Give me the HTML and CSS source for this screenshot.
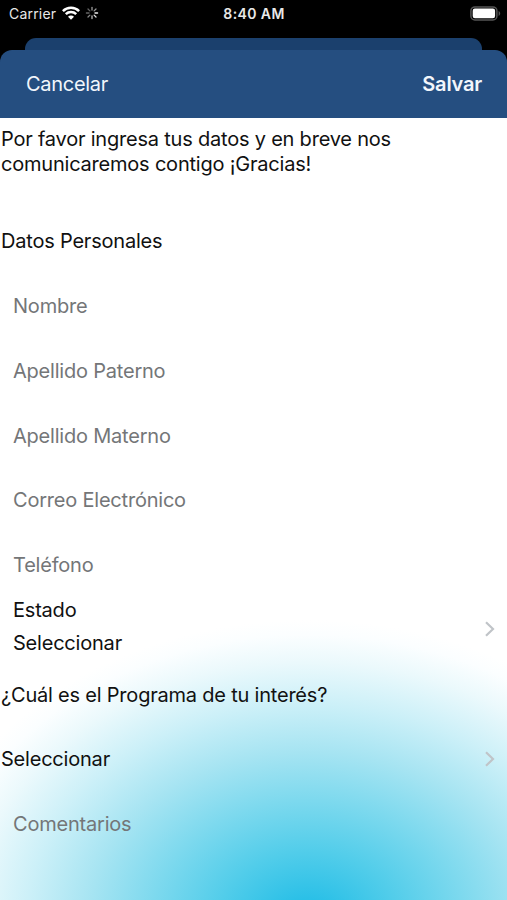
FILE: index.html
```html
<!DOCTYPE html>
<html lang="es">
<head>
<meta charset="utf-8">
<meta name="viewport" content="width=device-width, initial-scale=1">
<title>Datos Personales</title>
<link rel="stylesheet" href="styles.css">
</head>
<body>
<div class="screen">
  <header class="status">
    <div class="status-left">
      <span class="carrier">Carrier</span>
      <svg class="wifi" width="18" height="14" viewBox="0 0 18 14" fill="none" stroke="#fff" stroke-width="2.5">
        <path d="M.9 5.1a11.5 11.5 0 0 1 16.2 0"/>
        <path d="M3.8 8.2a7.4 7.4 0 0 1 10.4 0"/>
        <path d="M6 10.7a4.2 4.2 0 0 1 6 0L9 13.7z" fill="#fff" stroke="none"/>
      </svg>
      <svg class="spinner" width="14" height="14" viewBox="-7 -7 14 14" stroke-width="1.3" stroke-linecap="round">
        <path d="M0-3V-5.6" stroke="#999"/>
        <path d="M2.1-2.1 4-4" stroke="#999"/>
        <path d="M3 0H5.6" stroke="#eee"/>
        <path d="M2.1 2.1 4 4" stroke="#ddd"/>
        <path d="M0 3V5.6" stroke="#bbb"/>
        <path d="M-2.1 2.1-4 4" stroke="#888"/>
        <path d="M-3 0H-5.6" stroke="#666"/>
        <path d="M-2.1-2.1-4-4" stroke="#666"/>
      </svg>
    </div>
    <span class="clock">8:40 AM</span>
    <svg class="battery" width="31" height="15" viewBox="0 0 31 15">
      <rect x=".9" y=".9" width="26" height="13" rx="4" fill="#000" stroke="#555" stroke-width="1.5"/>
      <rect x="2.7" y="2.6" width="22.4" height="9.6" rx="2.2" fill="#fff"/>
      <path d="M28.6 5.1c2.1.8 2.1 4 0 4.8z" fill="#555"/>
    </svg>
  </header>
  <div class="sheet-behind"></div>
  <main class="sheet">
    <nav class="navbar">
      <span class="cancel">Cancelar</span>
      <span class="save">Salvar</span>
    </nav>
    <div class="form">
      <div class="intro">Por favor ingresa tus datos y en breve nos<br>comunicaremos contigo ¡Gracias!</div>
      <div class="row"><span>Datos Personales</span></div>
      <div class="row field"><span>Nombre</span></div>
      <div class="row field"><span>Apellido Paterno</span></div>
      <div class="row field"><span>Apellido Materno</span></div>
      <div class="row field"><span>Correo Electrónico</span></div>
      <div class="row field"><span>Teléfono</span></div>
      <div class="row picker inset">
        <div class="stack"><span>Estado</span><span>Seleccionar</span></div>
        <svg class="chevron" width="12" height="18" viewBox="0 0 12 18"><path d="M2 2.2 9 9 2 15.8"/></svg>
      </div>
      <div class="row"><span>¿Cuál es el Programa de tu interés?</span></div>
      <div class="row picker">
        <span>Seleccionar</span>
        <svg class="chevron" width="12" height="18" viewBox="0 0 12 18"><path d="M2 2.2 9 9 2 15.8"/></svg>
      </div>
      <div class="row field"><span>Comentarios</span></div>
    </div>
  </main>
</div>
</body>
</html>
```
FILE: styles.css
```css
* { box-sizing: border-box; }
body {
  margin: 0;
  background: #000;
  font-family: Inter, "Liberation Sans", sans-serif;
  font-size: 20px;
  letter-spacing: -0.21px;
  color: #111;
}
.screen {
  width: 507px;
  height: 900px;
  display: flex;
  flex-direction: column;
  overflow: hidden;
}
.status {
  height: 38px;
  flex: none;
  padding: 0 7px 11px 9px;
  display: grid;
  grid-template-columns: 1fr auto 1fr;
  align-items: center;
  color: #e8e8e8;
  font-size: 14px;
  letter-spacing: 0.2px;
}
.status-left { display: flex; align-items: center; }
.wifi { margin-left: 6px; margin-top: -2px; }
.spinner { margin-left: 5px; margin-top: -1px; }
.clock { font-weight: 600; letter-spacing: 0.4px; margin-left: -1px; }
.battery { justify-self: end; margin-right: -1px; }
.sheet-behind {
  height: 12px;
  flex: none;
  margin: 0 25px;
  background: #1b406d;
  border-radius: 11px 11px 0 0;
}
.sheet {
  flex: 1;
  display: flex;
  flex-direction: column;
}
.navbar {
  height: 68px;
  flex: none;
  padding: 0 25px 0 26px;
  display: flex;
  justify-content: space-between;
  align-items: center;
  background: #254e80;
  border-radius: 12px 12px 0 0;
  color: #f2f6fc;
  letter-spacing: -0.3px;
}
.save { font-weight: 600; letter-spacing: -0.2px; }
.form {
  flex: 1;
  background: #fff radial-gradient(ellipse 390px 300px at 308px 802px,
    #24bde5 0%, #2bc0e7 7%, #52cdea 23%, #7dd9ee 40%, #a6e4f2 56%, #ccf0f8 72%, #ebf9fc 86%, #fbfeff 95%, #fff 100%);
}
.intro {
  height: 91px;
  padding: 9px 0 0 1px;
  line-height: 24.5px;
}
.row {
  height: 64.75px;
  padding-left: 1px;
  display: flex;
  align-items: center;
}
.field { padding-left: 13px; color: #747678; }
.inset { padding-left: 13px; }
.picker { justify-content: space-between; padding-right: 11px; }
.stack { display: flex; flex-direction: column; line-height: 32.5px; margin-top: -6.5px; }
.chevron { fill: none; stroke: #c0c4c8; stroke-width: 2.2; margin-top: -1px; }
```
